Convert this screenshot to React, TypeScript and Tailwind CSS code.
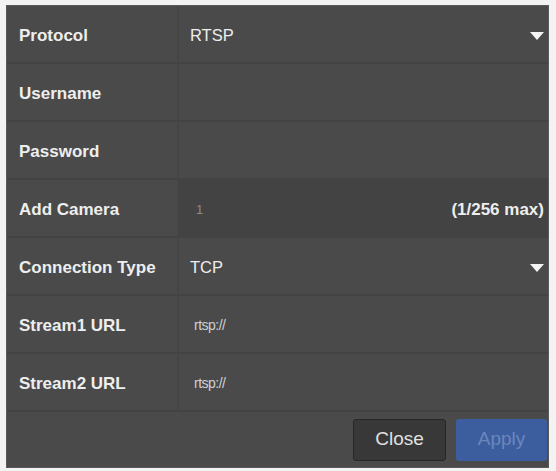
import React from "react";

type Row = {
  label: string;
  value?: string;
  kind?: "select" | "text" | "url" | "count";
};

const rows: Row[] = [
  { label: "Protocol", value: "RTSP", kind: "select" },
  { label: "Username" },
  { label: "Password" },
  { label: "Add Camera", value: "1", kind: "count" },
  { label: "Connection Type", value: "TCP", kind: "select" },
  { label: "Stream1 URL", value: "rtsp://", kind: "url" },
  { label: "Stream2 URL", value: "rtsp://", kind: "url" },
];

const Caret = () => (
  <svg width="16" height="10" viewBox="0 0 16 10" className="shrink-0">
    <path d="M1 1 L15 1 L8 9 Z" fill="#f4f4f4" />
  </svg>
);

const App = () => {
  return (
    <div
      className="w-[556px] h-[471px] bg-[#f3f3f3] pt-[5px] pl-[6px]"
      style={{ fontFamily: '"Liberation Sans", Arial, sans-serif' }}
    >
      <div className="w-[543px] h-[463px] bg-[#4a4a4a] border border-[#5a5a5a] flex flex-col">
        {rows.map((row) => (
          <div
            key={row.label}
            className="h-[58px] flex border-b-2 border-[#434343]"
          >
            <div className="w-[172px] shrink-0 flex items-center pl-[12px] pt-[3px] border-r-2 border-[#454545] text-[17px] font-bold text-[#eeeeee]">
              {row.label}
            </div>
            <div
              className={
                row.kind === "count"
                  ? "flex-1 flex items-center justify-between pl-[17px] pr-[4px] pt-[3px] bg-[#434343]"
                  : "flex-1 flex items-center justify-between pl-[11px] pr-[3px] pt-[3px]"
              }
            >
              {row.kind === "select" && (
                <>
                  <span className="text-[16.5px] text-[#eeeeee]">{row.value}</span>
                  <Caret />
                </>
              )}
              {row.kind === "url" && (
                <span className="text-[14px] text-[#d0d0d0] pl-[4px] tracking-[-0.5px]">{row.value}</span>
              )}
              {row.kind === "count" && (
                <>
                  <span className="text-[13px] text-[#8a8a8a]">{row.value}</span>
                  <span className="text-[17px] font-bold text-[#eeeeee]">(1/256 max)</span>
                </>
              )}
            </div>
          </div>
        ))}
        <div className="flex-1 flex items-center justify-end gap-[10px] pr-[1px]">
          <button className="w-[93px] h-[42px] rounded-[3px] bg-[#383838] border border-[#262626] text-[19px] text-[#e0e0e0]">
            Close
          </button>
          <button className="w-[91px] h-[42px] rounded-[3px] bg-[#3d5e9e] text-[19px] text-[#6a86bd]">
            Apply
          </button>
        </div>
      </div>
    </div>
  );
};

export default App;
